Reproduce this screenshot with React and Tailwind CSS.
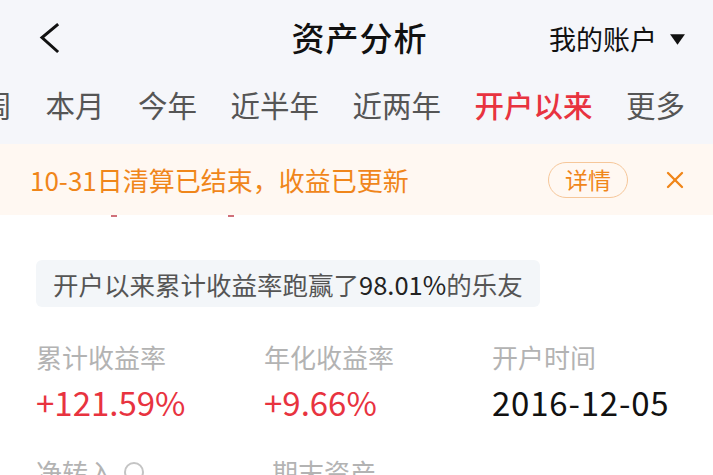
import { X } from 'lucide-react';

const TABS = ['本周', '本月', '今年', '近半年', '近两年', '开户以来', '更多'];

const STATS = [
  { label: '累计收益率', value: '+121.59%', red: true },
  { label: '年化收益率', value: '+9.66%', red: true },
  { label: '开户时间', value: '2016-12-05', red: false },
];

export default function App() {
  return (
    <div
      className="w-[713px] h-[475px] overflow-hidden bg-white"
      style={{ fontFamily: '"Noto Sans CJK SC", "Noto Sans", sans-serif' }}
    >
      {/* top area */}
      <div className="bg-[#f5f6fa] pb-[10px]">
        <header className="relative h-[76px] flex items-center justify-center">
          <svg
            className="absolute left-[36px] top-[20px]"
            width="28"
            height="36"
            viewBox="0 0 28 36"
            fill="none"
            stroke="#111"
            strokeWidth="3"
            strokeLinecap="square"
          >
            <path d="M21 5 L6 17.5 L21 31" />
          </svg>
          <h1 className="text-[33px] font-medium text-[#111] tracking-[1px] ml-[6px]">资产分析</h1>
          <div className="absolute right-[27px] top-[19px] flex items-center gap-[12px]">
            <span className="text-[27px] text-[#111]">我的账户</span>
            <svg width="17" height="13" viewBox="0 0 16 12">
              <path d="M1 1 H15 L8 11 Z" fill="#111" />
            </svg>
          </div>
        </header>
        <nav className="h-[58px] flex items-center gap-[33.5px] ml-[-47px] whitespace-nowrap">
          {TABS.map((t) => (
            <span
              key={t}
              className={
                t === '开户以来'
                  ? 'text-[29.5px] text-[#e8333f] font-medium leading-none'
                  : 'text-[29.5px] text-[#555] leading-none'
              }
            >
              {t}
            </span>
          ))}
        </nav>
      </div>

      {/* settlement banner */}
      <div className="h-[71px] bg-[#fff8f2] flex items-center pl-[30px] pr-[24px]">
        <span className="text-[26px] text-[#f0861a] flex-1 leading-none">10-31日清算已结束，收益已更新</span>
        <span className="h-[36px] w-[80px] rounded-full border border-[#f6c79a] flex items-center justify-center text-[23px] text-[#f0861a] leading-none">
          详情
        </span>
        <X className="ml-[33px]" size={28} color="#f0861a" strokeWidth={2} />
      </div>

      {/* peeking marks behind banner */}
      <div className="relative h-[2px]">
        <div className="absolute left-[111px] top-0 w-[6px] h-[2px] bg-[#d0707a]" />
        <div className="absolute left-[228px] top-0 w-[6px] h-[2px] bg-[#d0707a]" />
      </div>

      <div className="px-[36px] pt-[43px]">
        <div className="inline-flex items-center h-[47px] px-[17px] rounded-[6px] bg-[#f3f6f9] text-[25.5px] text-[#555] leading-none">
          开户以来累计收益率跑赢了<span className="text-[#222]">98.01%</span>的乐友
        </div>

        <div className="grid grid-cols-[228px_228px_1fr] mt-[37px]">
          {STATS.map((s) => (
            <div key={s.label} className="flex flex-col">
              <span className="text-[26px] text-[#b3b3b3] leading-none">{s.label}</span>
              <span
                className={
                  s.red
                    ? 'mt-[16px] text-[33px] text-[#e8333f] leading-none'
                    : 'mt-[16px] text-[33px] text-[#111] tracking-[0.8px] leading-none'
                }
              >
                {s.value}
              </span>
            </div>
          ))}
        </div>

        <div className="grid grid-cols-[236px_1fr] mt-[40px]">
          <div className="flex items-center gap-[10px] text-[26px] text-[#b3b3b3] leading-none">
            净转入
            <span className="w-[20px] h-[20px] rounded-full border-2 border-[#c4c4c4]" />
          </div>
          <span className="text-[26px] text-[#b3b3b3] leading-none">期末资产</span>
        </div>
      </div>
    </div>
  );
}
